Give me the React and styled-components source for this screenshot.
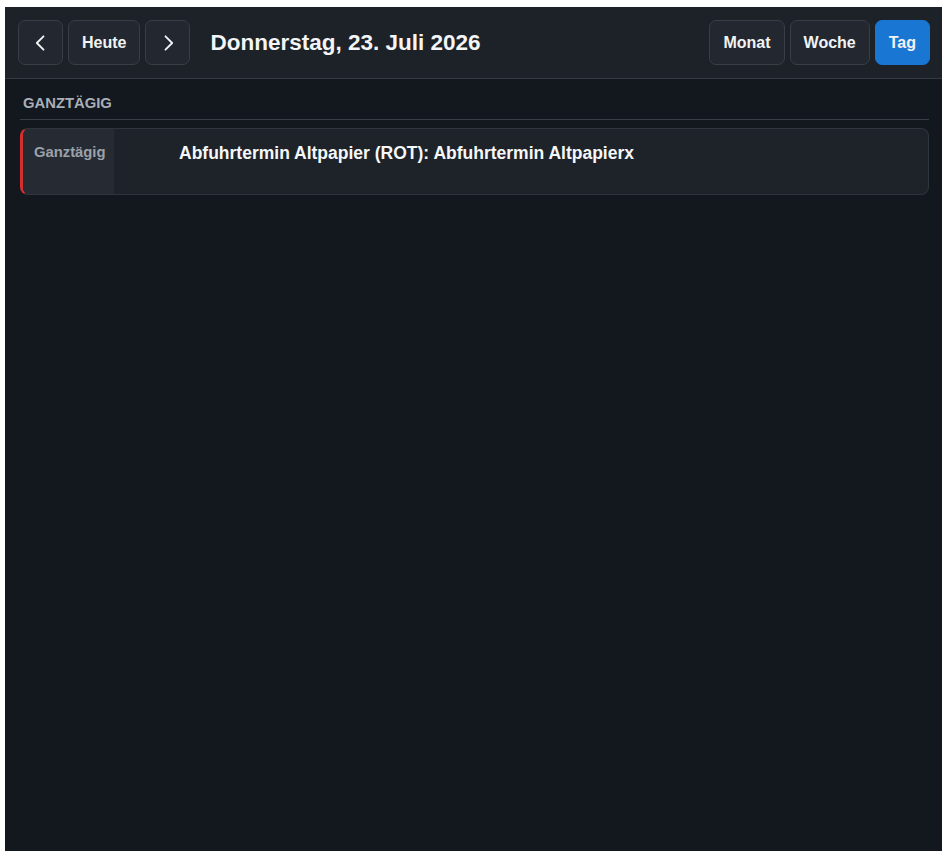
import React from "react"
import styled, { createGlobalStyle } from "styled-components"

const Global = createGlobalStyle`
  html, body { margin: 0; padding: 0; background: #fff; }
  body { font-family: "Liberation Sans", Arial, sans-serif; }
`

const events = [
  { id: 1, label: "Ganztägig", title: "Abfuhrtermin Altpapier (ROT): Abfuhrtermin Altpapierx", color: "#d32f2f" },
]

const Chevron = ({ dir }) => (
  <svg width="20" height="20" viewBox="0 0 24 24" fill="none" stroke="currentColor" strokeWidth="2.2" strokeLinecap="round" strokeLinejoin="round">
    {dir === "left" ? <path d="M15 4l-8 8 8 8" /> : <path d="M9 4l8 8-8 8" />}
  </svg>
)

const App = () => {
  return (
    <>
      <Global />
      <Frame>
        <Toolbar>
          <Group>
            <Button square aria-label="zurück"><Chevron dir="left" /></Button>
            <Button>Heute</Button>
            <Button square aria-label="weiter"><Chevron dir="right" /></Button>
            <Title>Donnerstag, 23. Juli 2026</Title>
          </Group>
          <Group>
            <Button>Monat</Button>
            <Button>Woche</Button>
            <Button active>Tag</Button>
          </Group>
        </Toolbar>
        <Body>
          <SectionHead>GANZTÄGIG</SectionHead>
          {events.map(ev => (
            <Card key={ev.id} accent={ev.color}>
              <TimeCol>{ev.label}</TimeCol>
              <EventTitle>{ev.title}</EventTitle>
            </Card>
          ))}
        </Body>
      </Frame>
    </>
  )
}

export default App

const Frame = styled.div`
  margin: 7px 5px 0 5px;
  min-height: calc(100vh - 7px);
  background: #13171e;
  display: flex;
  flex-direction: column;
`

const Toolbar = styled.div`
  display: flex;
  align-items: center;
  justify-content: space-between;
  padding: 13px 12px 13px 13px;
  background: #1d2128;
  border-bottom: 1px solid #353a42;
`

const Group = styled.div`
  display: flex;
  align-items: center;
  gap: 5px;
`

const Button = styled.button`
  height: 45px;
  min-width: ${p => (p.square ? "45px" : "auto")};
  padding: ${p => (p.square ? "0" : "1px 13px 0")};
  display: flex;
  align-items: center;
  justify-content: center;
  border-radius: 7px;
  border: 1px solid ${p => (p.active ? "#1976d2" : "#393e46")};
  background: ${p => (p.active ? "#1976d2" : "#232830")};
  color: #f1f3f5;
  font-family: "Liberation Sans", Arial, sans-serif;
  font-weight: 700;
  font-size: 16px;
  cursor: pointer;
`

const Title = styled.h1`
  margin: 1px 0 0 15px;
  font-size: 22.5px;
  font-weight: 700;
  color: #f3f5f7;
`

const Body = styled.div`
  padding: 16px 13px 0 15px;
  display: flex;
  flex-direction: column;
`

const SectionHead = styled.div`
  font-size: 14.8px;
  font-weight: 700;
  color: #a9afb8;
  padding: 0 0 8px 3px;
  border-bottom: 1px solid #3a3f47;
  margin-bottom: 8px;
`

const Card = styled.div`
  display: flex;
  min-height: 67px;
  box-sizing: border-box;
  border: 1px solid #30353d;
  border-left: 3px solid ${p => p.accent};
  border-radius: 8px;
  background: #1e232a;
  overflow: hidden;
`

const TimeCol = styled.div`
  width: 91px;
  background: #262b33;
  color: #9ba1a9;
  font-size: 14.8px;
  font-weight: 700;
  padding: 15px 0 0 11px;
  box-sizing: border-box;
`

const EventTitle = styled.div`
  padding: 14px 0 0 65px;
  font-size: 17.5px;
  font-weight: 700;
  color: #f5f7f9;
`
